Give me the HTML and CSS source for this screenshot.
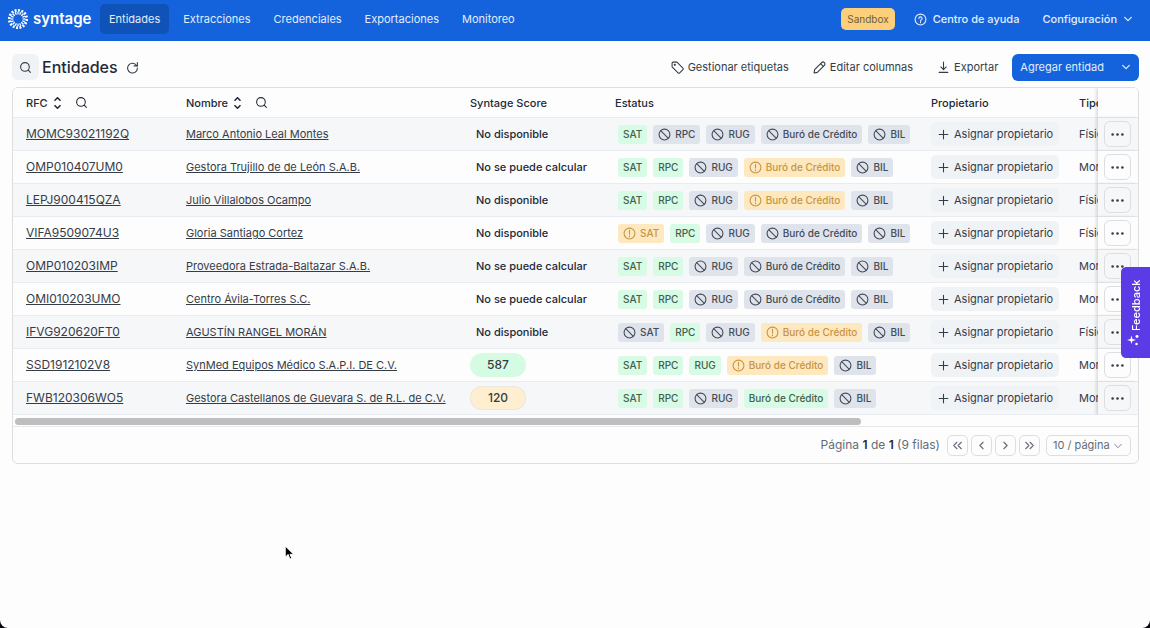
FILE: index.html
```html
<!DOCTYPE html>
<html lang="es">
<head>
    <meta charset="UTF-8">
    <meta name="viewport" content="width=device-width, initial-scale=1.0">
    <title>Entidades</title>
    <link rel="stylesheet" href="styles.css">
</head>
<body>
    <!-- Shared icons -->
    <svg class="sprite" aria-hidden="true">
        <symbol id="i-search" viewBox="0 0 24 24"><circle cx="11" cy="11" r="8"/><path d="M17 17l4 4"/></symbol>
        <symbol id="i-refresh" viewBox="0 0 24 24"><path d="M21 3v6h-6"/><path d="M20 9a9 9 0 1 0 1 4"/></symbol>
        <symbol id="i-sort" viewBox="0 0 12 16"><path d="M2 5l4-4 4 4M2 11l4 4 4-4"/></symbol>
        <symbol id="i-tag" viewBox="0 0 24 24"><path d="M2 4v7l11 11a2 2 0 0 0 3 0l6-6a2 2 0 0 0 0-3L11 2H4a2 2 0 0 0-2 2z"/><circle cx="7" cy="7" r="1"/></symbol>
        <symbol id="i-pencil" viewBox="0 0 24 24"><path d="M2 22l1-6L16 3a3 3 0 0 1 5 5L8 21z"/><path d="M14 5l5 5"/></symbol>
        <symbol id="i-download" viewBox="0 0 24 24"><path d="M12 2v14M7 11l5 5 5-5M4 21h16"/></symbol>
        <symbol id="i-down" viewBox="0 0 24 24"><path d="M4 8l8 8 8-8"/></symbol>
        <symbol id="i-left" viewBox="0 0 24 24"><path d="M15 6l-6 6 6 6"/></symbol>
        <symbol id="i-right" viewBox="0 0 24 24"><path d="M9 6l6 6-6 6"/></symbol>
        <symbol id="i-first" viewBox="0 0 24 24"><path d="M11 6l-6 6 6 6M19 6l-6 6 6 6"/></symbol>
        <symbol id="i-last" viewBox="0 0 24 24"><path d="M5 6l6 6-6 6M13 6l6 6-6 6"/></symbol>
        <symbol id="i-help" viewBox="0 0 24 24"><circle cx="12" cy="12" r="10"/><path d="M9 10a3 3 0 1 1 4 3c-1 .5-1 1-1 2M12 17v1"/></symbol>
        <symbol id="i-ban" viewBox="0 0 24 24"><circle cx="12" cy="12" r="10"/><path d="M5 5l14 14"/></symbol>
        <symbol id="i-warn" viewBox="0 0 24 24"><circle cx="12" cy="12" r="10"/><path d="M12 6v7M12 16v2"/></symbol>
        <symbol id="i-plus" viewBox="0 0 24 24"><path d="M12 4v16M4 12h16"/></symbol>
        <symbol id="i-dots" viewBox="0 0 24 24"><g fill="currentColor" stroke="none"><circle cx="3" cy="12" r="2.4"/><circle cx="12" cy="12" r="2.4"/><circle cx="21" cy="12" r="2.4"/></g></symbol>
    </svg>

    <header class="navbar">
        <a class="brand" href="#">
            <svg class="brand-mark" viewBox="0 0 24 24">
                <circle cx="12" cy="12" r="9.5" pathLength="112" stroke-width="3" stroke-dasharray="4 3"/>
                <circle cx="12" cy="12" r="6.5" pathLength="112" stroke-width="3" stroke-dasharray="4 3" stroke-dashoffset="2"/>
            </svg>
            syntage
        </a>
        <nav class="nav-links">
            <a class="active" href="#">Entidades</a>
            <a href="#">Extracciones</a>
            <a href="#">Credenciales</a>
            <a href="#">Exportaciones</a>
            <a href="#">Monitoreo</a>
        </nav>
        <div class="nav-right">
            <span class="sandbox">Sandbox</span>
            <a href="#"><svg class="icon"><use href="#i-help"/></svg>Centro de ayuda</a>
            <button class="config">Configuración<svg class="icon small"><use href="#i-down"/></svg></button>
        </div>
    </header>

    <main>
        <div class="toolbar">
            <button class="search-btn" aria-label="Buscar"><svg class="icon"><use href="#i-search"/></svg></button>
            <h1>Entidades</h1>
            <button class="refresh" aria-label="Actualizar"><svg class="icon"><use href="#i-refresh"/></svg></button>
            <div class="actions">
                <button><svg class="icon"><use href="#i-tag"/></svg>Gestionar etiquetas</button>
                <button><svg class="icon"><use href="#i-pencil"/></svg>Editar columnas</button>
                <button><svg class="icon"><use href="#i-download"/></svg>Exportar</button>
            </div>
            <div class="split-btn">
                <button>Agregar entidad</button>
                <button class="split-more" aria-label="Más opciones"><svg class="icon small"><use href="#i-down"/></svg></button>
            </div>
        </div>

        <section class="card">
            <div class="table-scroll">
                <table>
                    <colgroup>
                        <col class="col-rfc"><col class="col-name"><col class="col-score"><col class="col-status"><col class="col-owner"><col><col class="col-menu">
                    </colgroup>
                    <thead>
                        <tr>
                            <th><div class="head">RFC<svg class="sort"><use href="#i-sort"/></svg><svg class="icon"><use href="#i-search"/></svg></div></th>
                            <th><div class="head">Nombre<svg class="sort"><use href="#i-sort"/></svg><svg class="icon"><use href="#i-search"/></svg></div></th>
                            <th>Syntage Score</th>
                            <th>Estatus</th>
                            <th>Propietario</th>
                            <th>Tipo</th>
                            <th class="sticky"></th>
                        </tr>
                    </thead>
                    <tbody id="entities"></tbody>
                </table>
            </div>
            <div class="scrollbar"><div class="thumb"></div></div>
            <div class="pagination">
                <span class="page-info">Página <b>1</b> de <b>1</b> (9 filas)</span>
                <button aria-label="Primera"><svg class="icon"><use href="#i-first"/></svg></button>
                <button aria-label="Anterior"><svg class="icon"><use href="#i-left"/></svg></button>
                <button aria-label="Siguiente"><svg class="icon"><use href="#i-right"/></svg></button>
                <button aria-label="Última"><svg class="icon"><use href="#i-last"/></svg></button>
                <div class="page-size">
                    <select aria-label="Filas por página"><option>10 / página</option></select>
                    <svg class="icon small"><use href="#i-down"/></svg>
                </div>
            </div>
        </section>
    </main>

    <button class="feedback">
        <svg viewBox="0 0 24 24"><path d="M15 4l2 6 7 2-7 2-2 7-2-7-7-2 7-2z"/><circle cx="5" cy="4" r="2.5"/><circle cx="4" cy="19" r="3"/></svg>
        <span>Feedback</span>
    </button>
    <svg class="cursor" viewBox="0 0 10 16"><path d="M1 1v12l3-3 2 5 2-1-2-4h4z"/></svg>

    <script src="script.js"></script>
</body>
</html>
```
FILE: script.js
```js
// Status tags: + available, - not requested, ! needs attention
const entities = [
    ['MOMC93021192Q', 'Marco Antonio Leal Montes', 'No disponible', '+SAT -RPC -RUG -Buró -BIL', 'Física'],
    ['OMP010407UM0', 'Gestora Trujillo de de León S.A.B.', 'No se puede calcular', '+SAT +RPC -RUG !Buró -BIL', 'Moral'],
    ['LEPJ900415QZA', 'Julio Villalobos Ocampo', 'No disponible', '+SAT +RPC -RUG !Buró -BIL', 'Física'],
    ['VIFA9509074U3', 'Gloria Santiago Cortez', 'No disponible', '!SAT +RPC -RUG -Buró -BIL', 'Física'],
    ['OMP010203IMP', 'Proveedora Estrada-Baltazar S.A.B.', 'No se puede calcular', '+SAT +RPC -RUG -Buró -BIL', 'Moral'],
    ['OMI010203UMO', 'Centro Ávila-Torres S.C.', 'No se puede calcular', '+SAT +RPC -RUG -Buró -BIL', 'Moral'],
    ['IFVG920620FT0', 'AGUSTÍN RANGEL MORÁN', 'No disponible', '-SAT +RPC -RUG !Buró -BIL', 'Física'],
    ['SSD1912102V8', 'SynMed Equipos Médico S.A.P.I. DE C.V.', 587, '+SAT +RPC +RUG !Buró -BIL', 'Moral'],
    ['FWB120306WO5', 'Gestora Castellanos de Guevara S. de R.L. de C.V.', 120, '+SAT +RPC -RUG +Buró -BIL', 'Moral']
];

const icon = name => `<svg class="icon"><use href="#i-${name}"/></svg>`;

function renderTag(tag) {
    const label = tag.slice(1) === 'Buró' ? 'Buró de Crédito' : tag.slice(1);
    if (tag[0] === '+') return `<span class="tag ok">${label}</span>`;
    if (tag[0] === '!') return `<span class="tag warn">${icon('warn')}${label}</span>`;
    return `<span class="tag off">${icon('ban')}${label}</span>`;
}

function renderScore(score) {
    if (typeof score === 'string') return `<span class="no-score">${score}</span>`;
    return `<span class="score ${score > 500 ? 'high' : 'low'}">${score}</span>`;
}

document.getElementById('entities').innerHTML = entities.map(([rfc, name, score, tags, type]) => `
    <tr>
        <td class="rfc"><a href="#">${rfc}</a></td>
        <td><a href="#">${name}</a></td>
        <td>${renderScore(score)}</td>
        <td><div class="tags">${tags.split(' ').map(renderTag).join('')}</div></td>
        <td><button class="assign">${icon('plus')}Asignar propietario</button></td>
        <td>${type}</td>
        <td class="sticky"><button class="menu" aria-label="Acciones">${icon('dots')}</button></td>
    </tr>
`).join('');
```
FILE: styles.css
```css
* {
    box-sizing: border-box;
}
html {
    background-color: #05070c;
}
body {
    margin: 0;
    min-height: 100vh;
    background-color: #fdfdfd;
    border-radius: 0 0 8px 8px;
    font-family: Inter, sans-serif;
    font-size: 11px;
    line-height: 16px;
    color: #353c48;
}
button, select {
    font: inherit;
    color: inherit;
    background: none;
    border: none;
    padding: 0;
    margin: 0;
    cursor: pointer;
}
a {
    color: inherit;
}
.sprite {
    display: none;
}
.icon {
    width: 13px;
    height: 13px;
    flex: none;
    fill: none;
    stroke: currentColor;
    stroke-width: 2;
    stroke-linecap: round;
    stroke-linejoin: round;
}
.icon.small {
    width: 10px;
    height: 10px;
    stroke-width: 3;
}

/* Top bar */
.navbar {
    display: flex;
    align-items: center;
    height: 41px;
    padding: 0 17px 3px 7px;
    background-color: #1463dc;
    color: #e3edfc;
}
.navbar a {
    text-decoration: none;
}
.brand {
    display: flex;
    align-items: center;
    gap: 4px;
    width: 93px;
    font-size: 15px;
    font-weight: 600;
    color: #fff;
}
.brand-mark {
    width: 22px;
    height: 22px;
    flex: none;
    fill: none;
    stroke: #fff;
}
.nav-links {
    display: flex;
    gap: 5px;
}
.nav-links a {
    padding: 7px 9px;
    border-radius: 5px;
}
.nav-links .active {
    background-color: #0f53b8;
}
.nav-right {
    display: flex;
    align-items: center;
    margin-left: auto;
    font-weight: 500;
}
.nav-right a, .config {
    display: flex;
    align-items: center;
    gap: 6px;
}
.nav-right a {
    margin: 0 23px 0 19px;
}
.sandbox {
    padding: 3px 6px;
    border-radius: 5px;
    background-color: #fecf7b;
    color: #6b6040;
    font-size: 10px;
    font-weight: 400;
}

/* Page toolbar */
main {
    padding: 12px 11px 0 12px;
}
.toolbar {
    display: flex;
    align-items: center;
    height: 28px;
    margin-bottom: 6px;
}
.search-btn {
    display: flex;
    align-items: center;
    justify-content: center;
    width: 27px;
    height: 26px;
    border-radius: 6px;
    background-color: #f0f3f6;
}
h1 {
    margin: 0 8px 0 3px;
    font-size: 16px;
    line-height: 24px;
    font-weight: 500;
    color: #222a37;
}
.refresh {
    display: flex;
}
.actions {
    display: flex;
    gap: 24px;
    margin-left: auto;
    margin-right: 14px;
}
.actions button {
    display: flex;
    align-items: center;
    gap: 4px;
}
.split-btn {
    display: flex;
    height: 27px;
    border-radius: 6px;
    background-color: #1463dc;
    color: #e3edfc;
}
.split-btn button {
    padding: 0 8px;
}
.split-btn .split-more {
    display: flex;
    align-items: center;
    justify-content: center;
    width: 27px;
}

/* Entities table */
.card {
    border: 1px solid #dcdee1;
    border-radius: 6px;
    overflow: hidden;
}
.table-scroll {
    overflow-x: auto;
    scrollbar-width: none;
}
table {
    width: 1496px;
    table-layout: fixed;
    border-collapse: separate;
    border-spacing: 0;
}
.col-rfc {
    width: 160px;
}
.col-name {
    width: 284px;
}
.col-score {
    width: 145px;
}
.col-status {
    width: 316px;
}
.col-owner {
    width: 148px;
}
.col-menu {
    width: 40px;
}
th, td {
    height: 33px;
    padding: 0 13px;
    border-bottom: 1px solid #e8ecf0;
    text-align: left;
    white-space: nowrap;
    background-color: #fdfdfd;
}
th {
    height: 30px;
    font-weight: 500;
    color: #222a37;
}
tbody tr:nth-child(odd) td {
    background-color: #f6f7f9;
}
td:nth-child(4) {
    padding-left: 16px;
}
.rfc {
    font-size: 12px;
}
.head {
    display: flex;
    align-items: center;
}
.sort {
    width: 9px;
    height: 12px;
    margin: 0 13px 0 5px;
    fill: none;
    stroke: currentColor;
    stroke-width: 2;
}
th.sticky, td.sticky {
    position: sticky;
    right: 0;
    padding: 0 6px;
    box-shadow: -2px 0 3px rgba(0, 0, 0, 0.13);
}
.no-score {
    margin-left: 6px;
    font-weight: 500;
    color: #222a37;
}
.score {
    display: block;
    width: 56px;
    border-radius: 12px;
    line-height: 24px;
    text-align: center;
    font-size: 12px;
    font-weight: 500;
}
.score.high {
    background-color: #d6fbe3;
}
.score.low {
    background-color: #fdefcf;
    box-shadow: inset 0 0 0 1px #ebe7e0;
}
.tags {
    display: flex;
    gap: 6px;
}
.tag {
    display: flex;
    align-items: center;
    gap: 4px;
    height: 19px;
    padding: 0 5px;
    border-radius: 3px;
    font-size: 10px;
    font-weight: 500;
}
.tag.ok {
    background-color: #d8fbe5;
    color: #42604f;
}
.tag.off {
    background-color: #dfe4ec;
    color: #444b57;
}
.tag.warn {
    background-color: #fde8bf;
    color: #c99443;
}
.assign {
    display: flex;
    align-items: center;
    gap: 4px;
    height: 24px;
    padding: 0 6px;
    border-radius: 5px;
    background-color: #f0f3f6;
}
.menu {
    display: flex;
    align-items: center;
    justify-content: center;
    width: 27px;
    height: 26px;
    border: 1px solid #dcdee1;
    border-radius: 6px;
}
.scrollbar {
    height: 12px;
    padding: 3px 2px;
    border-bottom: 1px solid #e9e7e7;
}
/* visible share of the table width */
.thumb {
    width: calc(100% * 1125 / 1490);
    height: 7px;
    border-radius: 4px;
    background-color: #bcbebf;
}

/* Pagination */
.pagination {
    display: flex;
    align-items: center;
    justify-content: flex-end;
    gap: 3px;
    height: 36px;
    padding-right: 7px;
    color: #646c78;
}
.page-info {
    margin-right: 4px;
    font-size: 12px;
}
.page-info b {
    font-weight: 600;
    color: #222a37;
}
.pagination button {
    display: flex;
    align-items: center;
    justify-content: center;
    width: 21px;
    height: 21px;
    border: 1px solid #dcdee1;
    border-radius: 5px;
}
.page-size {
    position: relative;
    margin-left: 3px;
}
.page-size select {
    appearance: none;
    width: 85px;
    height: 21px;
    padding: 0 6px;
    border: 1px solid #dcdee1;
    border-radius: 5px;
}
.page-size .icon {
    position: absolute;
    right: 8px;
    top: 6px;
    stroke-width: 2;
    pointer-events: none;
}

/* Floating elements */
.feedback {
    position: fixed;
    right: 0;
    top: 267px;
    width: 29px;
    height: 91px;
    border-radius: 0 5px 5px 0;
    background-color: #5b3be6;
    color: #fff;
    font-weight: 500;
    text-align: center;
    writing-mode: vertical-rl;
    transform: rotate(180deg);
}
.feedback svg {
    width: 12px;
    height: 12px;
    fill: currentColor;
    vertical-align: middle;
}
.cursor {
    position: fixed;
    left: 284px;
    top: 545px;
    width: 10px;
    height: 15px;
    fill: #000;
    stroke: #fff;
    stroke-width: 1;
}
```
